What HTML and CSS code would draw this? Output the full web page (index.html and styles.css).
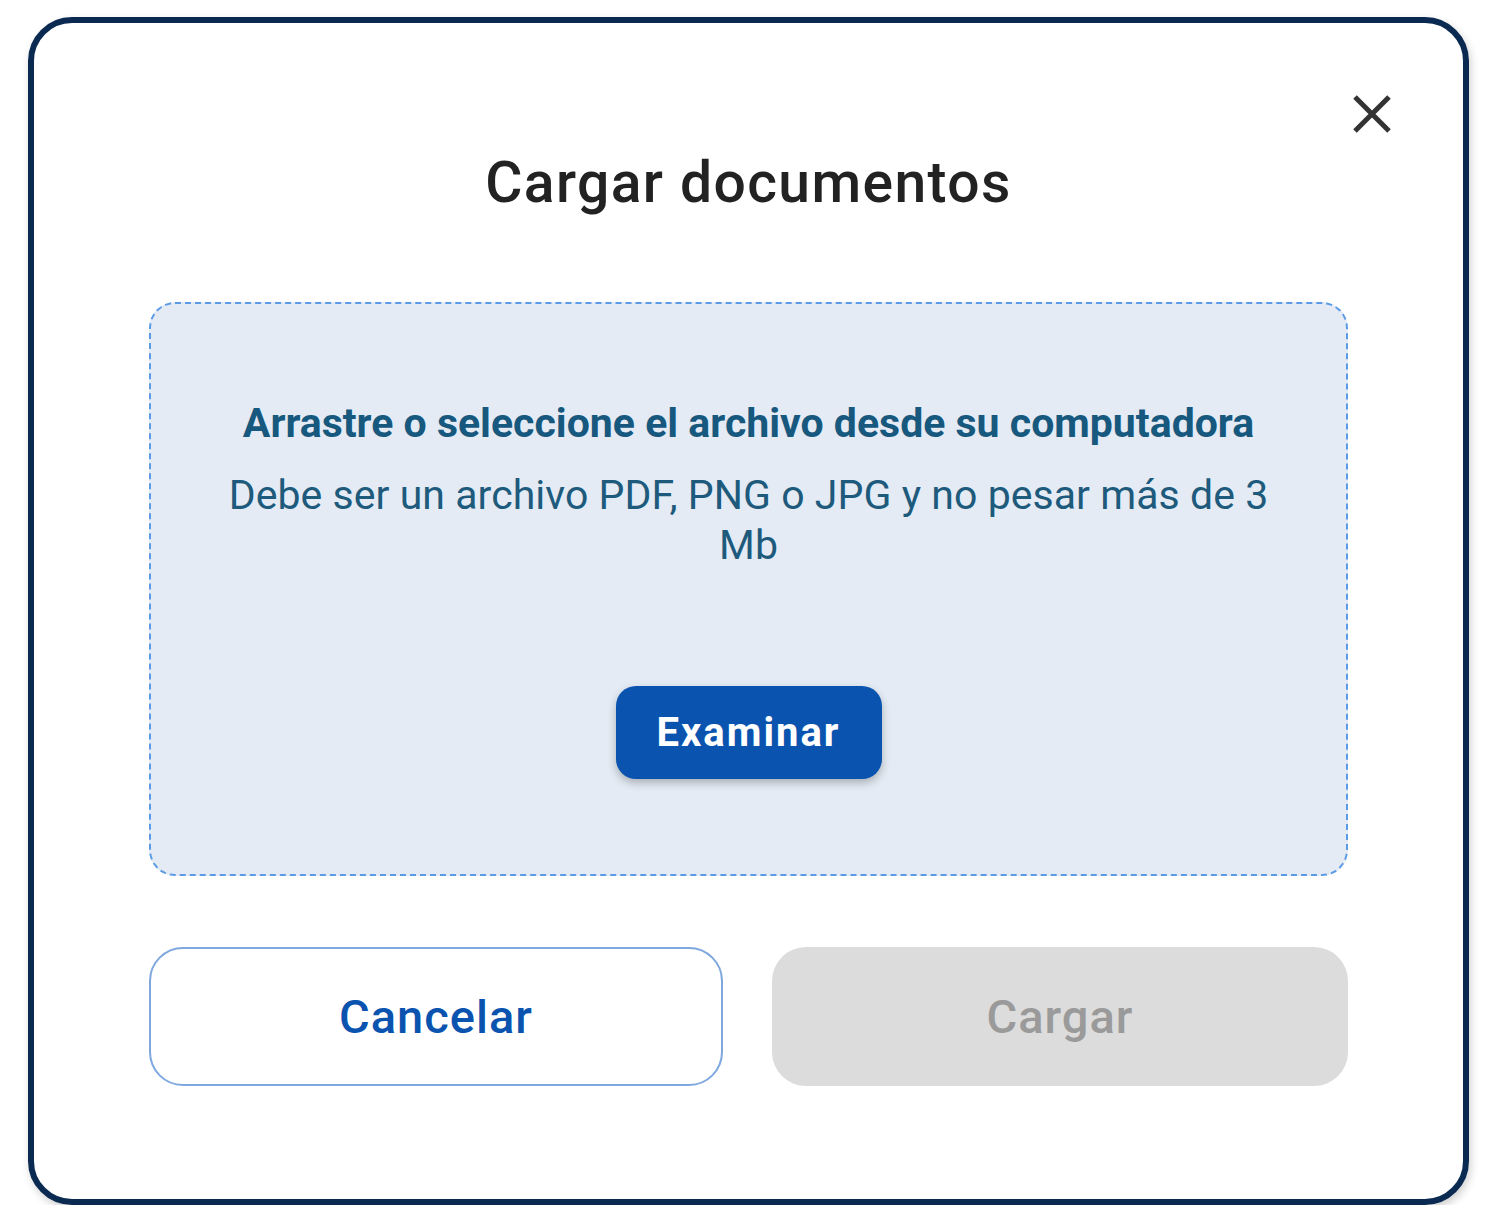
FILE: index.html
```html
<!DOCTYPE html>
<html lang="es">
<head>
<meta charset="utf-8">
<title>Cargar documentos</title>
<link rel="stylesheet" href="styles.css">
</head>
<body>
<div class="modal">
  <button class="close" aria-label="Cerrar">
    <svg viewBox="0 0 40 40" width="40" height="40"><path d="M3 3 L37 37 M37 3 L3 37" stroke="#333" stroke-width="5" stroke-linecap="butt" fill="none"/></svg>
  </button>
  <h1 class="title">Cargar documentos</h1>
  <div class="drop">
    <p class="drop-head">Arrastre o seleccione el archivo desde su computadora</p>
    <p class="drop-sub">Debe ser un archivo PDF, PNG o JPG y no pesar más de 3 Mb</p>
    <button class="btn-exam">Examinar</button>
  </div>
  <div class="actions">
    <button class="btn btn-cancel">Cancelar</button>
    <button class="btn btn-load" disabled>Cargar</button>
  </div>
</div>
</body>
</html>
```
FILE: styles.css
```css
html, body {
  margin: 0;
  padding: 0;
  background: #ffffff;
  font-family: Roboto, "Liberation Sans", Arial, sans-serif;
}
body {
  padding: 17px 0 0 28px;
}
.modal {
  position: relative;
  box-sizing: border-box;
  width: 1441px;
  height: 1188px;
  border: 6px solid #0b2a52;
  border-radius: 44px;
  background: #fff;
  box-shadow: 2px 4px 8px rgba(0,0,0,0.18);
  padding: 0 115px;
  display: flex;
  flex-direction: column;
}
.close {
  position: absolute;
  top: 71px;
  right: 71px;
  width: 40px;
  height: 40px;
  padding: 0;
  border: 0;
  background: none;
}
.close svg { display: block; }
.title {
  margin: 127px 0 0;
  text-align: center;
  font-size: 57px;
  font-weight: 500;
  line-height: 66px;
  color: #222;
  letter-spacing: 1.4px;
}
.drop {
  margin-top: 86px;
  box-sizing: border-box;
  height: 574px;
  border: 2px dashed #5b9be6;
  border-radius: 26px;
  background: #e4ebf4;
  display: flex;
  flex-direction: column;
  align-items: center;
  padding: 94px 70px 0;
  text-align: center;
}
.drop-head {
  margin: 0;
  font-size: 41px;
  font-weight: 700;
  line-height: 50px;
  color: #17587e;
  letter-spacing: 0;
}
.drop-sub {
  margin: 22px 0 0;
  font-size: 41px;
  font-weight: 400;
  line-height: 50px;
  color: #1d5a7c;
  letter-spacing: 0.05px;
}
.btn-exam {
  margin-top: 116px;
  width: 266px;
  height: 93px;
  border: 0;
  border-radius: 20px;
  background: #0a54b0;
  color: #fff;
  font-family: inherit;
  font-size: 40px;
  font-weight: 700;
  letter-spacing: 2px;
  box-shadow: 0 4px 8px rgba(0,0,0,0.25);
}
.actions {
  margin-top: 71px;
  display: grid;
  grid-template-columns: 574px 576px;
  justify-content: space-between;
}
.btn {
  height: 139px;
  border-radius: 34px;
  font-family: inherit;
  font-size: 47px;
  font-weight: 500;
  letter-spacing: 1px;
}
.btn-cancel {
  background: #fff;
  border: 2px solid #7ea8de;
  color: #0a54b0;
}
.btn-load {
  background: #dcdcdc;
  border: 0;
  color: #9a9a9a;
}
```
